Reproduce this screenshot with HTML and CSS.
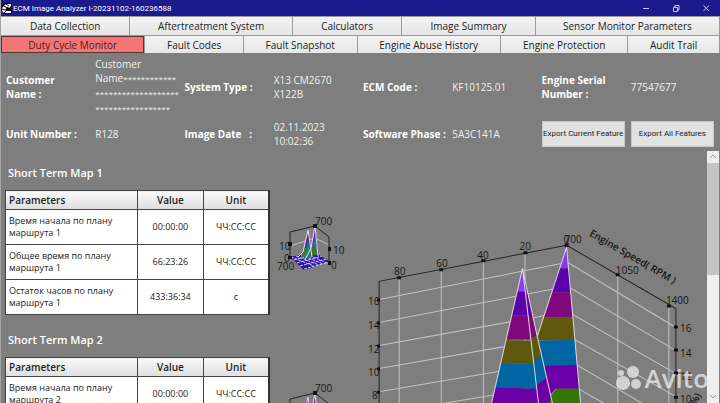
FILE: index.html
```html
<!DOCTYPE html>
<html lang="en">
<head>
<meta charset="utf-8">
<meta name="viewport" content="width=device-width, initial-scale=1">
<title>ECM Image Analyzer</title>
<link rel="stylesheet" href="styles.css">
</head>
<body>
<div class="app">
  <header class="titlebar">
    <svg class="logo" viewBox="0 0 11 11" aria-hidden="true"><path d="M3 0H11V11H3L0 7V4Z" fill="#080812"/><path d="M10 1H5L1 5V8L3 10H10V8H5L4 7L6 4H7L8 5L10 3Z" fill="#fff"/><path d="M5 1L8 3M3 3L6 5M1 6L4 7M3 10L5 8" fill="none" stroke="#080812" stroke-width="1"/></svg>
    <h1 class="title">ECM Image Analyzer I-20231102-160236588</h1>
    <div class="window-controls">
      <button class="control" aria-label="Minimize"><svg viewBox="0 0 8 8"><path d="M1 4.500H7"/></svg></button>
      <button class="control" aria-label="Restore"><svg viewBox="0 0 8 8"><path d="M1.500 3.500H5.500V7.500H1.500ZM3 3V1.500H7V6H6"/></svg></button>
      <button class="control" aria-label="Close"><svg viewBox="0 0 8 8"><path d="M1.500 1.500L7 7M7 1.500L1.500 7"/></svg></button>
    </div>
  </header>
  <nav class="tabs">
    <div class="tabrow tabrow-first">
      <button class="tab">Data Collection</button><button class="tab">Aftertreatment System</button><button class="tab">Calculators</button><button class="tab">Image Summary</button><button class="tab">Sensor Monitor Parameters</button>
    </div>
    <div class="tabrow tabrow-second">
      <button class="tab tab-active">Duty Cycle Monitor</button><button class="tab">Fault Codes</button><button class="tab">Fault Snapshot</button><button class="tab">Engine Abuse History</button><button class="tab">Engine Protection</button><button class="tab">Audit Trail</button>
    </div>
  </nav>
  <section class="info">
    <b>Customer<br>Name :</b><span>Customer<br>Name<i class="stars">************</i><br><i class="stars">*******************</i><br><i class="stars">*****************</i></span>
    <b>System Type :</b><span>X13 CM2670<br>X122B</span>
    <b>ECM Code :</b><span>KF10125.01</span>
    <b>Engine Serial<br>Number :</b><span>77547677</span>
    <b>Unit Number :</b><span>R128</span>
    <b>Image Date &nbsp; :</b><span>02.11.2023<br>10:02:36</span>
    <b>Software Phase :</b><span>5A3C141A</span>
    <button class="export">Export Current Feature</button><button class="export">Export All Features</button>
  </section>
  <main class="content">
    <div class="maps" id="maps">
      <section class="map">
        <h2>Short Term Map 1</h2>
        <div class="map-body">
          <table>
            <thead><tr><th class="name">Parameters</th><th>Value</th><th>Unit</th></tr></thead>
            <tbody>
              <tr><td class="name">Время начала по плану маршрута 1</td><td>00:00:00</td><td>ЧЧ:СС:СС</td></tr>
              <tr><td class="name">Общее время по плану маршрута 1</td><td>66:23:26</td><td>ЧЧ:СС:СС</td></tr>
              <tr><td class="name">Остаток часов по плану маршрута 1</td><td>433:36:34</td><td>с</td></tr>
            </tbody>
          </table>
          <svg class="thumb-chart" viewBox="270 190 80 125" role="img" aria-label="Map 1 preview">
            <g id="mini">
              <path d="M290 246L315 238L329 245" class="grid"/>
              <path d="M290 257L315 252L330 262L304 270Z" fill="#2b14a4"/>
              <path d="M291 257L314 266M296 256L319 265M301 255L323 264M306 254L327 263M294 260L320 253M297 263L322 256M300 266L326 259M304 269L330 262" stroke="#d6c6f2" stroke-width="1" stroke-dasharray="3 1" fill="none"/>
              <path d="M308 230L303 255L313 256Z" fill="#6f138e"/><path d="M308 240L305 251H311Z" fill="#08789b"/><path d="M305 248L301 257L312 258L309 248Z" fill="#27834e"/>
              <path d="M315 226L310 252L319 256Z" fill="#7521b0"/><path d="M315 237L312 247H316Z" fill="#167d8c"/><path d="M313 247L310 255H317V247Z" fill="#347b27"/>
              <path d="M308 230L303 252L298 257M308 230L312 257M315 226L311 248L305 260M315 226L318 256" fill="none" stroke="#e8ddf3"/>
              <path d="M290 258V232L315 226L329 237V263" class="axis"/>
              <path d="M288 242h4v4h-4zM288 256h4v3h-4zM313 224h4v4h-4zM328 247h3v4h-3zM328 261h3v4h-3z" fill="#111"/>
              <text x="315" y="225">700</text><text x="279" y="250">10</text><text x="284" y="262">0</text><text x="277" y="270">700</text><text x="333" y="254">10</text><text x="331" y="269">0</text>
            </g>
          </svg>
        </div>
      </section>
      <section class="map">
        <h2>Short Term Map 2</h2>
        <div class="map-body">
          <table>
            <thead><tr><th class="name">Parameters</th><th>Value</th><th>Unit</th></tr></thead>
            <tbody>
              <tr><td class="name">Время начала по плану маршрута 2</td><td>00:00:00</td><td>ЧЧ:СС:СС</td></tr>
            </tbody>
          </table>
          <svg class="thumb-chart" viewBox="270 190 80 125" role="img" aria-label="Map 2 preview"><use href="#mini"/></svg>
        </div>
      </section>
    </div>
    <svg class="surface" viewBox="350 151 356 252" preserveAspectRatio="xMinYMin slice" role="img" aria-label="Engine speed surface chart">
      <g class="grid">
        <path d="M399 278V403M441 269V403M483 261V403M524.500 253V403M617 275V403M668 305V403"/>
        <path d="M379 299L567 262L675 327M379 322L567 286L675 350M379 345L567 311L675 373M379 368L567 335L675 396M379 391L567 359L642 403M441 403L567 382L604 403"/>
      </g>
      <path class="axis" d="M379 403V281L566 245L675 308V403"/>
      <path d="M397 276h4v3h-4zM439 268h4v3h-4zM481 259h4v3h-4zM523 251h4v3h-4zM564 243h4v4h-4zM615 273h4v3h-4zM666 304h4v3h-4zM377 298h3v3h-3zM377 321h3v3h-3zM377 344h3v3h-3zM377 367h3v3h-3zM377 390h3v3h-3zM673 325h4v3h-4zM673 348h4v3h-4zM673 371h4v3h-4zM673 395h4v3h-4z" fill="#111"/>
      <defs>
        <clipPath id="right"><path d="M566 245L537 335L520 403H580Z"/></clipPath>
        <clipPath id="left"><path d="M522 268L491 403H538Z"/></clipPath>
        <clipPath id="side"><path d="M522 268L537 337L552 403H538Z"/></clipPath>
      </defs>
      <g clip-path="url(#right)">
        <path fill="#833bf0" d="M510 245H585V268H510Z"/><path fill="#5d00ac" d="M510 268H585V292H510Z"/><path fill="#7e087c" d="M510 292H585V317H510Z"/><path fill="#5e580c" d="M510 317H585V340H510Z"/><path fill="#0065a3" d="M510 341L585 339V364L545 365L530 385H510Z"/><path fill="#6b00a9" d="M530 385L545 365L585 364V388L555 388L541 403H530Z"/><path fill="#327500" d="M545 403L556 388H585V403Z"/>
      </g>
      <g clip-path="url(#left)">
        <path fill="#8540ef" d="M490 268H545V291H490Z"/><path fill="#5d00ac" d="M490 291H545V315H490Z"/><path fill="#7e087c" d="M490 315H545V339H490Z"/><path fill="#5e580c" d="M490 339L545 341V364L490 362Z"/><path fill="#0065a3" d="M490 362L545 364V389L490 386Z"/><path fill="#6b00a9" d="M490 386L545 389V403H490Z"/>
      </g>
      <g clip-path="url(#side)">
        <path fill="#6d24c9" d="M520 268H555V292H520Z"/><path fill="#5d00ac" d="M520 288L545 308V325L520 310Z"/><path fill="#7e087c" d="M520 310L545 322V331L520 344Z"/><path fill="#5e580c" d="M520 344L545 331V350L520 374Z"/><path fill="#0065a3" d="M520 374L555 341V370L520 397Z"/><path fill="#6b00a9" d="M530 390L555 370V403H530Z"/><path fill="#327500" d="M548 403L553 395V403Z"/>
      </g>
      <path d="M491 403L522 268L538 403M522 268L537 337L552 403M537 335L566 247L580 403" fill="none" stroke="#ded8df" stroke-width="1"/>
      <g><text x="394" y="275">80</text><text x="436" y="267">60</text><text x="477" y="259">40</text><text x="519" y="250">20</text><text x="563" y="243">0</text><text x="564" y="243">700</text><text x="615" y="274">1050</text><text x="665" y="304">1400</text><text x="368" y="305">16</text><text x="368" y="329">14</text><text x="368" y="352">12</text><text x="368" y="375">10</text><text x="372" y="398">8</text><text x="679" y="332">16</text><text x="679" y="356">14</text><text x="679" y="379">12</text><text x="679" y="402">10</text></g>
      <text class="axis-title" transform="translate(588 235) rotate(30)">Engine Speed( RPM )</text>
      <text class="axis-title" transform="translate(694 408) rotate(-65)">(%)</text>
    </svg>
    <div class="scrollbar" role="scrollbar" aria-controls="maps" aria-valuenow="0" aria-label="Vertical scroll">
      <svg class="arrow" viewBox="0 0 12 12"><path d="M3 7L6 4L9 7"/></svg>
      <div class="track"><div class="handle"></div></div>
      <svg class="arrow" viewBox="0 0 12 12"><path d="M3 4L6 7L9 4"/></svg>
    </div>
  </main>
  <div class="watermark"><svg viewBox="0 0 26 25" aria-hidden="true"><circle cx="5" cy="7" r="3"/><circle cx="17" cy="6" r="6"/><circle cx="7" cy="17" r="7"/><circle cx="20" cy="18" r="5"/></svg><span>Avito</span></div>
</div>
</body>
</html>
```
FILE: styles.css
```css
* { box-sizing: border-box; }
body { margin: 0; font-family: "Open Sans", "Noto Sans", sans-serif; font-size: 10px; color: #fff; background: #7e7e7e; }
button { font: inherit; margin: 0; padding: 0; border: 0; }
.app { position: relative; display: flex; flex-direction: column; height: 100vh; overflow: hidden; border-left: 1px solid #a4a4a4; }
.titlebar { display: flex; flex: 0 0 16px; align-items: center; background: #1c1b8e; }
.logo { width: 11px; height: 11px; }
.title { flex: 1; margin: 0 0 0 1px; font-family: Roboto, sans-serif; font-size: 8px; font-weight: 400; }
.window-controls { display: flex; gap: 22px; padding-right: 10px; }
.control { display: flex; width: 8px; height: 8px; background: none; }
.control svg { width: 8px; height: 8px; fill: none; stroke: #c8c8ec; stroke-width: 1; }
.tabs { flex: none; background: #999; }
.tabrow { display: grid; height: 19px; gap: 1px; padding: 1px 1px 0 0; }
.tabrow-second { height: 18px; }
.tabrow-first { grid-template-columns: 129fr 162fr 109fr 133fr 184fr; }
.tabrow-second { grid-template-columns: 144fr 98fr 113fr 143fr 127fr 91fr; }
.tab { overflow: hidden; font-size: 10px; line-height: 16px; white-space: nowrap; color: #222; background: linear-gradient(#f3f3f3, #e6e6e6); }
.tab-active { color: #541818; background: #f17777; border: 1px solid #593434; line-height: 14px; }
.info { display: grid; grid-template-columns: repeat(8, 1fr); grid-template-rows: 67px 28px; flex: none; align-items: center; padding: 0 0 3px 5px; line-height: 14px; white-space: nowrap; }
.info span { color: #f0f0f0; }
.stars { font-style: normal; font-size: 8px; }
.export { height: 26px; margin: 0 6px 0 0; font-family: Roboto, sans-serif; font-size: 8px; color: #222; background: #e1e1e1; border: 1px solid #c9c9c9; }
.content { display: flex; flex: 1; min-height: 0; overflow: hidden; }
.maps { flex: 0 0 349px; padding: 12px 0 0 4px; }
.map { margin-bottom: 15px; }
h2 { margin: 0 0 7px 3px; font-size: 11px; line-height: 20px; font-weight: 600; }
.map-body { display: flex; height: 125px; }
table { align-self: flex-start; width: 265px; border-collapse: collapse; table-layout: fixed; font-size: 9px; line-height: 12px; color: #222; background: #fff; border: 1px solid #333; border-right-width: 2px; }
th, td { padding: 0; border: 1px solid #444; text-align: center; font-weight: 400; }
th { height: 19px; font-size: 10px; font-weight: 600; background: linear-gradient(#f9f9f9, #dedede); }
td { height: 35px; }
.name { width: 132px; padding-left: 3px; text-align: left; }
.thumb-chart { width: 80px; height: 125px; overflow: visible; }
svg text { font-size: 10px; fill: #161616; }
.grid { fill: none; stroke: #c3c3c3; stroke-width: 1; }
.axis { fill: none; stroke: #222; stroke-width: 1; }
.surface { flex: 1; min-width: 0; height: 100%; }
svg .axis-title { font-size: 10px; font-weight: 600; }
.scrollbar { display: flex; flex: 0 0 12px; flex-direction: column; margin-right: 1px; background: #efefef; }
.arrow { flex: none; width: 12px; height: 12px; fill: none; stroke: #999; }
.track { flex: 1; }
.handle { height: 49%; background: #c4c4c4; }
.watermark { position: absolute; right: 11px; bottom: 9px; display: flex; align-items: center; gap: 3px; color: rgba(238, 238, 238, .75); font-size: 26px; line-height: 32px; font-weight: 600; }
.watermark svg { width: 26px; height: 25px; fill: currentColor; }
```
